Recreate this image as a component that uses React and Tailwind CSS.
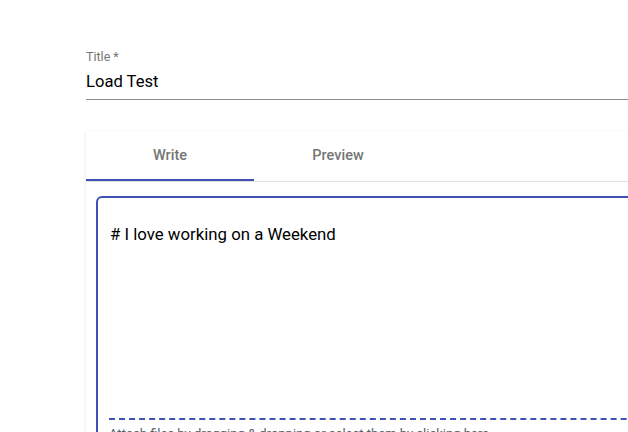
import React from "react";

const tabs = ["Write", "Preview"];

const App = () => {
  const active = 0;

  return (
    <div className="w-[628px] h-[432px] overflow-hidden bg-white font-['Roboto',sans-serif]">
      <div className="pl-[86px] pt-[50px] w-[760px]">
        {/* title field */}
        <div className="w-[542px]">
          <label className="block text-[12.5px] leading-[14px] text-[#757575]">Title *</label>
          <div className="mt-[4px] pb-[4px] border-b border-[#8c8c8c] text-[16.6px] leading-[27px] text-black">
            Load Test
          </div>
        </div>

        {/* editor card */}
        <div className="mt-[31px] bg-white rounded-[2px] shadow-[0_1px_3px_rgba(0,0,0,0.12),0_1px_1px_rgba(0,0,0,0.06)]">
          <div className="flex border-b border-[#e0e0e0]">
            {tabs.map((tab, i) => (
              <button
                key={tab}
                type="button"
                className="relative w-[168px] h-[50px] text-[14.5px] font-medium text-[#757575]"
              >
                {tab}
                {i === active && (
                  <span className="absolute left-0 right-0 bottom-0 h-[2px] bg-[#3f51b5]" />
                )}
              </button>
            ))}
          </div>

          <div className="pl-[10px] pt-[14px]">
            <div className="border-2 border-[#3f51b5] rounded-[6px] pl-[11px] pr-[11px]">
              <div className="h-[220px] pt-[24px] pl-[1px] text-[16.8px] leading-[24px] text-black">
                # I love working on a Weekend
              </div>
              <div className="border-t-2 border-dashed border-[#3f51b5] pt-[6px] pb-[6px] text-[13px] leading-[16px] text-[#586069]">
                Attach files by dragging &amp; dropping or select them by clicking here.
              </div>
            </div>
          </div>
        </div>
      </div>
    </div>
  );
};

export default App;
